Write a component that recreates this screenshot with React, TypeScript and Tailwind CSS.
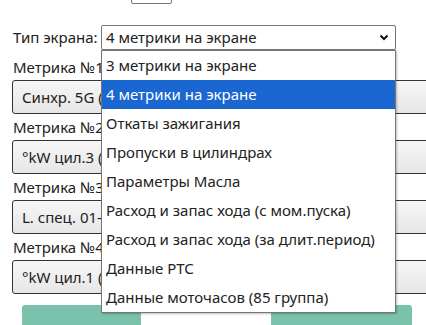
import React from "react";

const screenTypes = [
  "3 метрики на экране",
  "4 метрики на экране",
  "Откаты зажигания",
  "Пропуски в цилиндрах",
  "Параметры Масла",
  "Расход и запас хода (с мом.пуска)",
  "Расход и запас хода (за длит.период)",
  "Данные РТС",
  "Данные моточасов (85 группа)",
];

const metrics = [
  { label: "Метрика №1", value: "Синхр. 5G (об/мин)" },
  { label: "Метрика №2", value: "°kW цил.3 (угол)" },
  { label: "Метрика №3", value: "L. спец. 01-02" },
  { label: "Метрика №4", value: "°kW цил.1 (угол)" },
];

export default function App() {
  const selected = 1;

  return (
    <div
      className="relative h-[325px] w-full overflow-hidden whitespace-nowrap bg-white text-[15px] text-[#222]"
      style={{ fontFamily: '"Noto Sans", "Open Sans", sans-serif' }}
    >
      <div className="pl-[13px]">
        {/* верхняя строка, почти целиком ушла вверх */}
        <div className="mt-[-20px] flex h-[24px] items-end">
          <span className="mb-[4px] w-[118px] flex-none leading-[24px]">Кол-во гр. др.:</span>
          <div className="h-[22px] w-[41px] flex-none rounded-[2px] border border-[#767676]" />
        </div>

        <div className="mt-[21px] flex items-center">
          <span className="w-[88px] flex-none leading-[25px]">Тип экрана:</span>
          <div className="flex h-[25px] w-[295px] flex-none items-center justify-between rounded-[2px] border border-[#767676] pl-[4px] pr-[6px]">
            <span>{screenTypes[selected]}</span>
            <svg width="10" height="7" viewBox="0 0 10 7">
              <polyline
                points="1.5,1.5 5,5 8.5,1.5"
                fill="none"
                stroke="#111"
                strokeWidth="2"
              />
            </svg>
          </div>
        </div>
      </div>

      <div className="mt-[7px] flex w-[440px] flex-col pl-[12px]">
        {metrics.map((m) => (
          <div key={m.label} className="flex flex-col pb-[3px]">
            <span className="pl-px leading-[20px]">{m.label}</span>
            <div className="mt-[3px] flex h-[34px] items-center rounded-[3px] border border-[#333] bg-gradient-to-b from-[#f7f7f7] to-[#e6e6e6] pl-[9px]">
              {m.value}
            </div>
          </div>
        ))}
      </div>

      <div className="mt-[8px] flex">
        <div className="ml-[22px] h-[30px] w-[119px] rounded-t-[3px] bg-[#7bc2ad]" />
        <div className="ml-[130px] h-[30px] w-[141px] rounded-t-[3px] bg-[#7bc2ad]" />
      </div>

      {/* раскрытый список select */}
      <div className="absolute left-[101px] top-[50px] w-[295px] border border-[#767676] bg-white shadow-[1px_1px_2px_rgba(0,0,0,0.25)]">
        {screenTypes.map((t, i) => (
          <div
            key={t}
            className={`flex h-[29px] items-center pl-[4px] ${
              i === selected ? "bg-[#1a67d2] text-white" : ""
            }`}
          >
            {t}
          </div>
        ))}
      </div>
    </div>
  );
}
